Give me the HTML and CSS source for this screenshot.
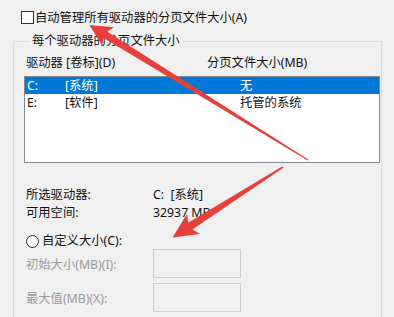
FILE: index.html
```html
<!DOCTYPE html>
<html lang="zh-CN">
<head>
<meta charset="utf-8">
<link rel="stylesheet" href="styles.css">
</head>
<body>
<div class="dlg">
  <label class="check-row"><span class="checkbox"></span><span>自动管理所有驱动器的分页文件大小(A)</span></label>
  <fieldset class="group">
    <legend>每个驱动器的分页文件大小</legend>
    <div class="list-head"><span>驱动器 [卷标](D)</span><span>分页文件大小(MB)</span></div>
    <div class="list">
      <div class="row sel"><span>C:</span><span>[系统]</span><span>无</span></div>
      <div class="row"><span>E:</span><span>[软件]</span><span>托管的系统</span></div>
    </div>
    <div class="info">
      <div class="info-row"><span>所选驱动器:</span><span>C:&nbsp; [系统]</span></div>
      <div class="info-row"><span>可用空间:</span><span>32937 MB</span></div>
    </div>
    <label class="radio-row"><span class="radio"></span><span>自定义大小(C):</span></label>
    <div class="field-row"><span>初始大小(MB)(I):</span><span class="box"></span></div>
    <div class="field-row second"><span>最大值(MB)(X):</span><span class="box"></span></div>
  </fieldset>
</div>
<svg class="arrows" width="394" height="317" viewBox="0 0 394 317">
  <polygon transform="translate(308 160) rotate(211.7)" points="0,-0.5 238,-3.6 235,-11 257,0 235,11 238,3.6 0,0.5"/>
  <polygon transform="translate(283 167) rotate(147.5)" points="0,-0.8 110,-4 106,-12 131,0 106,12 110,4 0,0.8"/>
</svg>
</body>
</html>
```

FILE: styles.css
```css
html, body {
  margin: 0;
  padding: 0;
}
body {
  width: 394px;
  height: 317px;
  overflow: hidden;
  position: relative;
  background: #f0f0f0;
  color: #111;
  font-family: "Noto Sans", "Noto Sans CJK SC", sans-serif;
  font-size: 12.3px;
}
.dlg {
  padding-top: 11px;
}
.check-row {
  display: flex;
  align-items: center;
  gap: 1px;
  margin-left: 21px;
  height: 13px;
  line-height: 13px;
}
.checkbox {
  width: 13px;
  height: 13px;
  box-sizing: border-box;
  border: 1px solid #333;
  background: #fff;
  flex: none;
}
.group {
  margin: 10px 0 0 13px;
  padding: 0 0 0 10px;
  width: 369px;
  height: 320px;
  box-sizing: border-box;
  border: 1px solid #dcdcdc;
  min-inline-size: 0;
}
.group legend {
  margin-left: 6px;
  padding: 0 2px;
  line-height: 14px;
}
.list-head {
  margin-top: 8px;
  padding-left: 2px;
  display: grid;
  grid-template-columns: 181px 1fr;
  line-height: 14px;
}
.list {
  margin-top: 6px;
  width: 356px;
  height: 87px;
  box-sizing: border-box;
  border: 1px solid #828790;
  background: #fff;
}
.row {
  display: grid;
  grid-template-columns: 38px 175px 1fr;
  padding-left: 2px;
  height: 17px;
  line-height: 17px;
}
.row.sel {
  background: #0078d7;
  color: #fff;
}
.info {
  margin-top: 23px;
}
.info-row {
  display: grid;
  grid-template-columns: 127px 1fr;
  padding-left: 2px;
  line-height: 18px;
}
.radio-row {
  display: flex;
  align-items: center;
  gap: 3px;
  margin-top: 11px;
  padding-left: 2px;
  height: 16px;
  line-height: 16px;
}
.radio {
  width: 13px;
  height: 13px;
  box-sizing: border-box;
  border: 1px solid #333;
  border-radius: 50%;
  background: #fff;
  flex: none;
}
.field-row {
  display: grid;
  grid-template-columns: 127px 88px;
  align-items: center;
  padding-left: 2px;
  color: #9b9b9b;
}
.field-row.second {
  margin-top: 5px;
}
.box {
  height: 29px;
  box-sizing: border-box;
  border: 1px solid #cfcfcf;
  background: #f0f0f0;
}
.arrows {
  position: absolute;
  left: 0;
  top: 0;
  pointer-events: none;
}
.arrows polygon {
  fill: #e5403b;
}
```
